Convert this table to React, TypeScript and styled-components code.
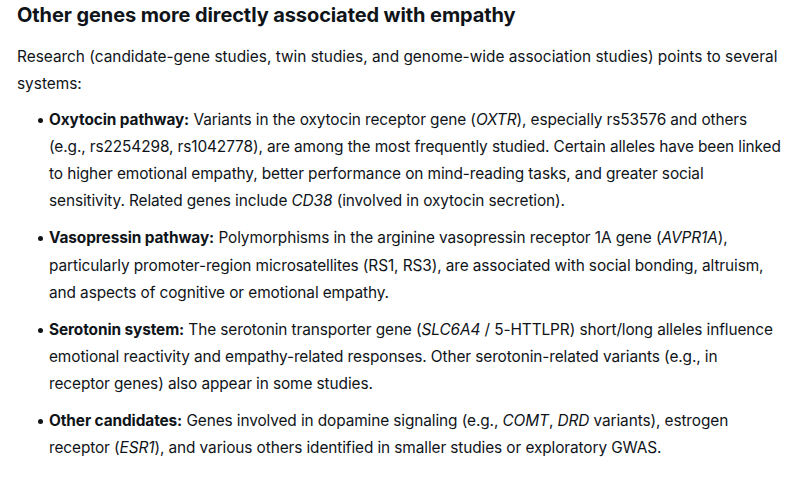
import React from 'react';
import styled, { createGlobalStyle } from 'styled-components';

const GlobalStyle = createGlobalStyle`
  body {
    margin: 0;
    background: #ffffff;
  }
`;

const Article = styled.article`
  padding: 1px 0 0 17px;
  color: #0f1419;
  font-family: Inter, "Noto Sans", "Liberation Sans", sans-serif;
  font-size: 15.4px;
  line-height: 27.3px;
`;

const Heading = styled.h3`
  margin: 0 0 14px 0;
  font-size: 20px;
  line-height: 28px;
  font-weight: 700;
  letter-spacing: -0.1px;
`;

const Paragraph = styled.p`
  margin: 0 0 8px 0;
  white-space: nowrap;
`;

const List = styled.ul`
  margin: 0;
  padding: 0 0 0 32px;
  list-style: none;
`;

const Item = styled.li`
  position: relative;
  margin-bottom: 9.5px;
  white-space: nowrap;
  letter-spacing: -0.1px;

  &::before {
    content: '';
    position: absolute;
    left: -11px;
    top: 12px;
    width: 5px;
    height: 5px;
    border-radius: 50%;
    background: #0f1419;
  }
`;

const Term = styled.strong`
  font-weight: 700;
`;

const Gene = styled.em`
  font-style: italic;
`;

interface Entry {
  term: string;
  body: React.ReactNode;
}

const entries: Entry[] = [
  {
    term: 'Oxytocin pathway:',
    body: (
      <>
        {' '}Variants in the oxytocin receptor gene (<Gene>OXTR</Gene>), especially rs53576 and others
        <br />
        (e.g., rs2254298, rs1042778), are among the most frequently studied. Certain alleles have been linked
        <br />
        to higher emotional empathy, better performance on mind-reading tasks, and greater social
        <br />
        sensitivity. Related genes include <Gene>CD38</Gene> (involved in oxytocin secretion).
      </>
    ),
  },
  {
    term: 'Vasopressin pathway:',
    body: (
      <>
        {' '}Polymorphisms in the arginine vasopressin receptor 1A gene (<Gene>AVPR1A</Gene>),
        <br />
        particularly promoter-region microsatellites (RS1, RS3), are associated with social bonding, altruism,
        <br />
        and aspects of cognitive or emotional empathy.
      </>
    ),
  },
  {
    term: 'Serotonin system:',
    body: (
      <>
        {' '}The serotonin transporter gene (<Gene>SLC6A4</Gene> / 5-HTTLPR) short/long alleles influence
        <br />
        emotional reactivity and empathy-related responses. Other serotonin-related variants (e.g., in
        <br />
        receptor genes) also appear in some studies.
      </>
    ),
  },
  {
    term: 'Other candidates:',
    body: (
      <>
        {' '}Genes involved in dopamine signaling (e.g., <Gene>COMT</Gene>, <Gene>DRD</Gene> variants), estrogen
        <br />
        receptor (<Gene>ESR1</Gene>), and various others identified in smaller studies or exploratory GWAS.
      </>
    ),
  },
];

export default function App() {
  return (
    <>
      <GlobalStyle />
      <Article>
        <Heading>Other genes more directly associated with empathy</Heading>
        <Paragraph>
          Research (candidate-gene studies, twin studies, and genome-wide association studies) points to several
          <br />
          systems:
        </Paragraph>
        <List>
          {entries.map((e) => (
            <Item key={e.term}>
              <Term>{e.term}</Term>
              {e.body}
            </Item>
          ))}
        </List>
      </Article>
    </>
  );
}
